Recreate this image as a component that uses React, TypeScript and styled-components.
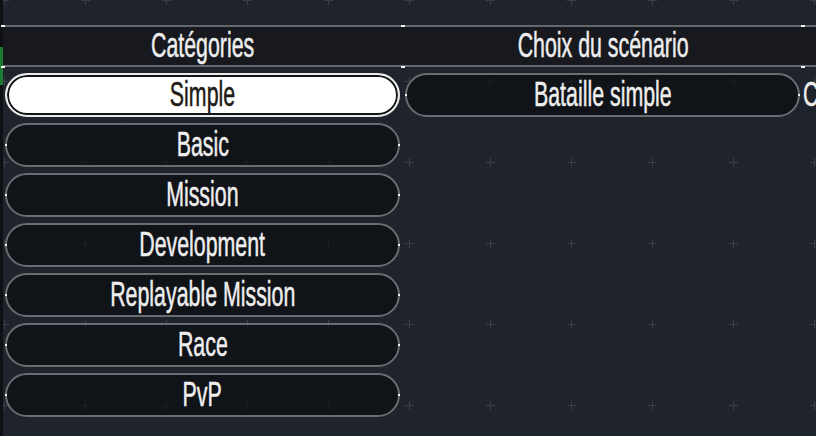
import React from "react";
import styled, { createGlobalStyle, css } from "styled-components";

const GlobalStyle = createGlobalStyle`
  html, body { margin: 0; padding: 0; background: #1f232b; overflow: hidden; }
  #root { width: 816px; height: 436px; }
`;

const Page = styled.div`
  position: relative;
  width: 816px;
  height: 436px;
  display: flex;
  background: #1f232b;
  overflow: hidden;
  font-family: "Liberation Sans", Arial, sans-serif;
`;

const Backdrop = styled.svg`
  position: absolute;
  inset: 0;
  pointer-events: none;
`;

const LeftStrip = styled.div`
  position: relative;
  z-index: 1;
  width: 3px;
  flex: none;
  background: #0e1013;
  padding-top: 47px;
  box-sizing: border-box;
`;

const GreenTab = styled.div`
  height: 38px;
  background: #1f7a34;
`;

const Main = styled.div`
  position: relative;
  z-index: 1;
  flex: 1;
  display: flex;
  flex-direction: column;
  padding-top: 25px;
  min-width: 0;
`;

const Columns = css`
  display: grid;
  grid-template-columns: 400px 400px 1fr;
`;

const HeaderRow = styled.div`
  ${Columns};
  height: 38px;
  border-top: 2px solid #64676d;
  border-bottom: 2px solid #64676d;
  background: rgba(0, 0, 0, 0.26);
`;

const HeaderCell = styled.div`
  position: relative;
  display: flex;
  align-items: center;
  justify-content: center;
  padding-bottom: 4px;
  box-sizing: border-box;

  &::before,
  &::after {
    content: "";
    position: absolute;
    left: -2px;
    width: 4px;
    height: 2px;
    background: #f2f2f2;
  }
  &::before { top: -2px; }
  &::after { bottom: -2px; }
`;

const Label = styled.span<{ $dark?: boolean }>`
  display: inline-block;
  font-size: 35px;
  line-height: 1;
  white-space: nowrap;
  color: ${(p) => (p.$dark ? "#1e1a15" : "#eeeeee")};
  -webkit-text-stroke: 0.5px ${(p) => (p.$dark ? "#1e1a15" : "#eeeeee")};
  transform: scaleX(0.61);
  transform-origin: center;
`;

const Body = styled.div`
  ${Columns};
  margin-top: 6px;
`;

const Column = styled.div`
  display: flex;
  flex-direction: column;
  gap: 6px;
  padding: 0 3px 0 2px;
`;

const Choice = styled.div<{ $selected?: boolean }>`
  position: relative;
  height: 44px;
  box-sizing: border-box;
  border-radius: 22px;
  display: flex;
  align-items: center;
  justify-content: center;
  padding-bottom: 3px;
  ${(p) =>
    p.$selected
      ? css`
          border: 2px solid #e9e9e9;
          background: #ffffff;
          box-shadow: inset 0 0 0 2px #121418;
        `
      : css`
          border: 2px solid #6b6c6f;
          background: rgba(8, 10, 11, 0.62);
          &::before,
          &::after {
            content: "";
            position: absolute;
            top: 50%;
            width: 2px;
            height: 2px;
            margin-top: -1px;
            background: #f4f4f4;
          }
          &::before { left: -2px; }
          &::after { right: -2px; }
        `}
`;

const Overflow = styled.div`
  height: 44px;
  display: flex;
  align-items: center;
  padding-bottom: 3px;
  box-sizing: border-box;
  overflow: hidden;
`;

const LeftLabel = styled(Label)`
  transform-origin: left center;
`;

const categories = [
  "Simple",
  "Basic",
  "Mission",
  "Development",
  "Replayable Mission",
  "Race",
  "PvP",
];

function GridPattern() {
  return (
    <Backdrop width="816" height="436" xmlns="http://www.w3.org/2000/svg">
      <defs>
        <pattern id="grid" x="-36" y="-40" width="81" height="81" patternUnits="userSpaceOnUse">
          <rect x="36" y="40" width="9" height="1" fill="#3a3e46" />
          <rect x="40" y="36" width="1" height="9" fill="#3a3e46" />
          <rect x="80" y="0" width="1" height="1" fill="#373b43" />
        </pattern>
      </defs>
      <rect width="816" height="436" fill="url(#grid)" />
    </Backdrop>
  );
}

export default function App() {
  return (
    <>
      <GlobalStyle />
      <Page>
        <GridPattern />
        <LeftStrip>
          <GreenTab />
        </LeftStrip>
        <Main>
          <HeaderRow>
            <HeaderCell>
              <Label>Catégories</Label>
            </HeaderCell>
            <HeaderCell>
              <Label>Choix du scénario</Label>
            </HeaderCell>
            <HeaderCell />
          </HeaderRow>
          <Body>
            <Column>
              {categories.map((c, i) => (
                <Choice key={c} $selected={i === 0}>
                  <Label $dark={i === 0}>{c}</Label>
                </Choice>
              ))}
            </Column>
            <Column>
              <Choice>
                <Label>Bataille simple</Label>
              </Choice>
            </Column>
            <Overflow>
              <LeftLabel>C</LeftLabel>
            </Overflow>
          </Body>
        </Main>
      </Page>
    </>
  );
}
